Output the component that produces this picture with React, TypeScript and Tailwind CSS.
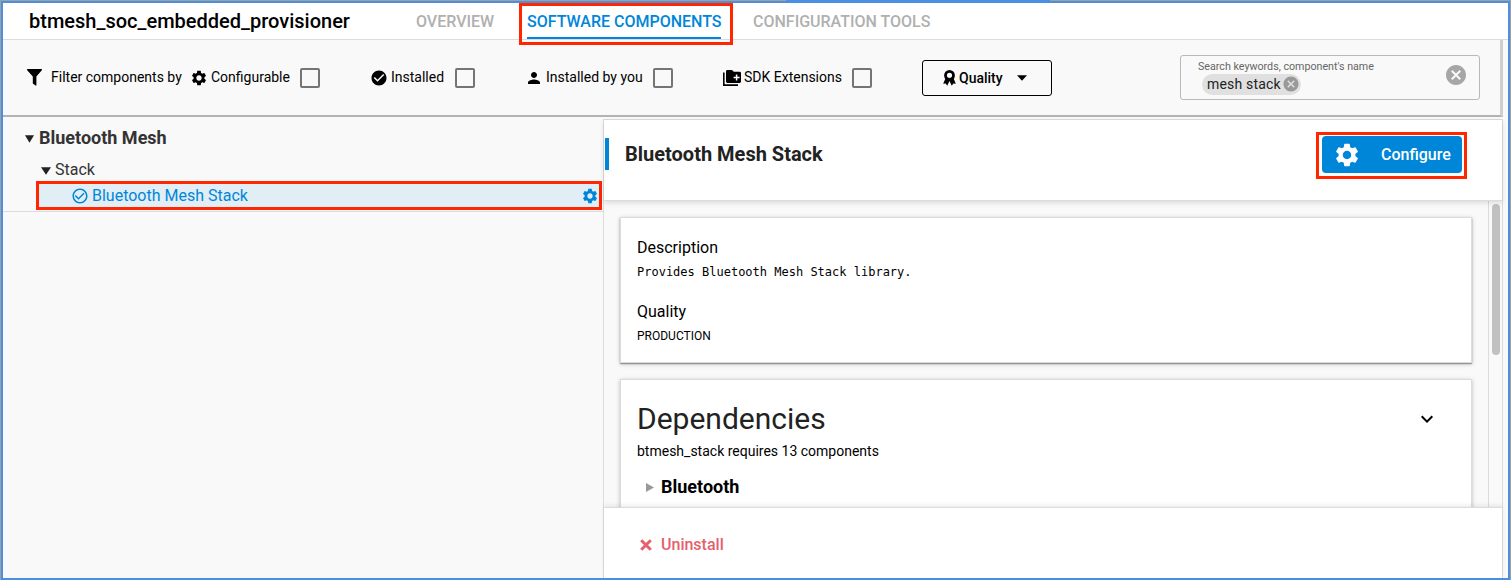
import React from "react";
import { MdSettings, MdCheckCircle, MdCheckCircleOutline, MdPerson, MdCancel, MdExpandMore } from "react-icons/md";

function CheckBox() {
  return <span className="block size-[20px] shrink-0 rounded-[2px] border-2 border-[#757575]" />;
}

function FunnelIcon() {
  return (
    <svg className="h-[17px] w-[15px] shrink-0" viewBox="0 0 15 17" fill="#000">
      <path d="M0.3 0H14.7Q15.2 .3 14.8 1.2L9.4 7.6V16.3Q9.2 17 8.6 16.6L5.8 14.4V7.6L.2 1.2Q-.2 .3 .3 0Z" />
    </svg>
  );
}

function ExtensionIcon() {
  return (
    <svg className="h-[16px] w-[18px] shrink-0" viewBox="0 0 18 16">
      <path d="M.8 2.5V15.1H15" fill="none" stroke="#000" strokeWidth="1.6" />
      <path d="M4.4 0H9L10.8 1.8H16.6A1.4 1.4 0 0 1 18 3.2V11.6A1.4 1.4 0 0 1 16.6 13H4.4A1.4 1.4 0 0 1 3 11.6V1.4A1.4 1.4 0 0 1 4.4 0Z" fill="#000" />
      <path d="M13.6 4.6V10.6M10.6 7.6H16.6" stroke="#fff" strokeWidth="1.5" />
    </svg>
  );
}

function AwardIcon() {
  return (
    <svg className="h-[16px] w-[13px] shrink-0" viewBox="0 0 13 16">
      <path d="M2.6 8L.2 13.8L2.7 13.5L4.2 15.8L6.5 11L8.8 15.8L10.3 13.5L12.8 13.8L10.4 8Z" fill="#000" />
      <circle cx="6.5" cy="5.4" r="4" fill="#f9f9f9" stroke="#000" strokeWidth="2.8" />
    </svg>
  );
}

function Caret({ className }: { className: string }) {
  return (
    <svg className={className} viewBox="0 0 9 8" preserveAspectRatio="none">
      <path d="M0 .3H9L4.5 7.7Z" />
    </svg>
  );
}

function Header() {
  return (
    <header className="flex h-[37px] shrink-0 border-b border-[#dcdcdc] bg-white font-medium">
      <h1 className="ml-[26px] w-[387px] pt-[4px] text-[20px] leading-[28px] text-black">btmesh_soc_embedded_provisioner</h1>
      <nav className="flex text-[16px] leading-[37px] whitespace-nowrap text-[#b0b0b0]">
        <span className="w-[111px]">OVERVIEW</span>
        <div className="relative w-[226px]">
          <span className="block h-[36px] w-[194px] border-b-2 border-[#0086d9] text-[#0086d9]">SOFTWARE COMPONENTS</span>
          <div className="absolute -left-[8px] top-0 z-10 h-[42px] w-[214px] border-3 border-[#ff2600]" />
        </div>
        <span>CONFIGURATION TOOLS</span>
      </nav>
    </header>
  );
}

function Filters() {
  return (
    <div className="flex h-[77px] w-[1500px] shrink-0 items-center border-r-3 border-b-2 border-r-[#cfcfcf] border-b-[#b3b3b3] text-[14px] text-black">
      <div className="flex w-[344px] items-center pl-[24px]">
        <FunnelIcon />
        <span className="ml-[9px] w-[139px]">Filter components by</span>
        <MdSettings className="size-[18px]" />
        <span className="ml-[3px] w-[89px]">Configurable</span>
        <CheckBox />
      </div>
      <div className="flex w-[157px] items-center pl-[23px]">
        <MdCheckCircle className="size-[18px]" />
        <span className="ml-[3px] w-[64px]">Installed</span>
        <CheckBox />
      </div>
      <div className="flex w-[196px] items-center pl-[21px]">
        <MdPerson className="size-[18px]" />
        <span className="ml-[3px] w-[107px]">Installed by you</span>
        <CheckBox />
      </div>
      <div className="flex w-[222px] items-center pl-[23px]">
        <ExtensionIcon />
        <span className="ml-[3px] w-[108px]">SDK Extensions</span>
        <CheckBox />
      </div>
      <button className="flex h-[36px] w-[130px] items-center rounded-[3px] border border-black pl-[20px] text-left font-medium">
        <AwardIcon />
        <span className="mt-px ml-[3px] w-[58px]">Quality</span>
        <Caret className="h-[6px] w-[10px]" />
      </button>
      <div className="ml-[128px] flex h-[45px] w-[300px] justify-between rounded-[3px] border border-[#b9b9b9] pl-[17px] pr-[11px]">
        <div>
          <div className="pt-[4px] text-[10.7px] leading-[14px] text-[#666]">Search keywords, component's name</div>
          <div className="ml-[4px] flex h-[21px] w-[99px] items-center rounded-full bg-[#e0e0e0] pl-[5px] text-[14px] text-[#222]">
            <span className="w-[75px] tracking-[0.18px]">mesh stack</span>
            <MdCancel className="-mt-px size-[18px] text-[#999]" />
          </div>
        </div>
        <MdCancel className="mt-[7px] size-[24px] text-[#a6a6a6]" />
      </div>
    </div>
  );
}

function Tree() {
  return (
    <aside className="w-[600px] shrink-0 text-[#333]">
      <div className="h-[95px] border-b border-[#dcdcdc] pt-[7px]">
        <div className="flex h-[28px] items-start pl-[22px] text-[18px] leading-[28px] font-bold">
          <Caret className="mt-[11px] mr-[5px] h-[8px] w-[9px] fill-[#222]" />
          Bluetooth Mesh
        </div>
        <div className="flex h-[29px] items-center pt-[6px] pl-[38px] text-[16px]">
          <Caret className="mt-[2px] mr-[4px] h-[8px] w-[10px] fill-[#222]" />
          Stack
        </div>
        <div className="ml-[33px] flex h-[29px] w-[566px] items-center border-3 border-[#ff2600] bg-[#e1eef5] pl-[32px] text-[16px] text-[#0086d9]">
          <MdCheckCircleOutline className="mr-[3px] size-[18px]" />
          <span className="grow">Bluetooth Mesh Stack</span>
          <MdSettings className="size-[18px]" />
        </div>
      </div>
    </aside>
  );
}

function Details() {
  return (
    <main className="mt-[2px] flex w-[900px] flex-col border-t border-x border-[#dcdcdc]">
      <div className="relative z-10 flex h-[81px] shrink-0 items-start border-b border-[#dcdcdc] bg-white shadow-[0_2px_5px_rgba(0,0,0,0.12)]">
        <div className="ml-px mt-[18px] h-[32px] w-[4px] bg-[#0086d9]" />
        <h2 className="ml-[16px] mt-[20px] grow text-[20px] leading-[28px] font-bold text-[#222]">Bluetooth Mesh Stack</h2>
        <div className="mr-[35px] mt-[12px] h-[47px] w-[151px] border-3 border-[#ff2600] p-[3px] pt-px pr-[2px]">
          <button className="flex h-[37px] w-[140px] items-center rounded-[4px] bg-[#0086d9] pl-[11px] text-[16px] font-medium text-white">
            <MdSettings className="mr-[20px] size-[28px]" />
            Configure
          </button>
        </div>
      </div>
      <div className="flex h-[306px] shrink-0 overflow-hidden">
        <div className="w-[884px] shrink-0 pl-[16px] pt-[16px]">
          <section className="h-[146px] w-[852px] border border-[#dcdcdc] bg-white pl-[16px] text-black shadow-[0_1px_4px_rgba(0,0,0,0.25),0_1px_1px_rgba(0,0,0,0.3)]">
            <h3 className="pt-[18px] text-[16px] leading-[24px]">Description</h3>
            <p className="font-['DejaVu_Sans_Mono',monospace] text-[12px] leading-[24px]">Provides Bluetooth Mesh Stack library.</p>
            <h3 className="pt-[16px] text-[16px] leading-[24px]">Quality</h3>
            <p className="text-[12px] leading-[24px]">PRODUCTION</p>
          </section>
          <section className="mt-[16px] h-[200px] w-[852px] border border-[#dcdcdc] bg-white pl-[16px] text-black shadow-[0_1px_4px_rgba(0,0,0,0.25)]">
            <div className="flex items-center pt-[19px] pr-[32px]">
              <h2 className="grow text-[30px] leading-[40px] text-[#222]">Dependencies</h2>
              <MdExpandMore className="size-[24px]" />
            </div>
            <p className="text-[14px] leading-[24px]">btmesh_stack requires 13 components</p>
            <div className="flex items-center pt-[10px] pl-[9px] text-[18px] leading-[28px] font-bold">
              <svg className="mr-[7px] h-[9px] w-[8px] fill-[#999]" viewBox="0 0 8 9"><path d="M0 0L8 4.5L0 9Z" /></svg>
              Bluetooth
            </div>
          </section>
        </div>
        <div className="grow border-l border-[#dcdcdc] pl-[3px] pt-[3px]">
          <div className="h-[151px] w-[8px] rounded-full bg-[#c1c1c1]" />
        </div>
      </div>
      <footer className="relative flex grow items-center border-t border-[#dcdcdc] bg-white pl-[36px] pt-[4px] text-[16px] font-medium text-[#e4606d] shadow-[0_-2px_4px_rgba(0,0,0,0.08)]">
        <svg className="mr-[9px] size-[12px]" viewBox="0 0 12 12"><path d="M1.2 1.2L10.8 10.8M10.8 1.2L1.2 10.8" stroke="currentColor" strokeWidth="3" /></svg>
        Uninstall
      </footer>
    </main>
  );
}

export default function App() {
  return (
    <div className="flex h-[580px] w-[1511px] flex-col overflow-hidden border-x border-[#a39f9b] bg-[#f9f9f9] font-[Roboto,sans-serif]">
      <div className="flex h-px shrink-0 bg-[#a39f9b] pl-[785px]">
        <div className="w-[264px] bg-[#4a90e2]" />
      </div>
      <div className="flex min-h-0 grow flex-col border-2 border-[#4a90e2]">
        <Header />
        <Filters />
        <div className="flex min-h-0 grow">
          <Tree />
          <Details />
        </div>
      </div>
    </div>
  );
}
